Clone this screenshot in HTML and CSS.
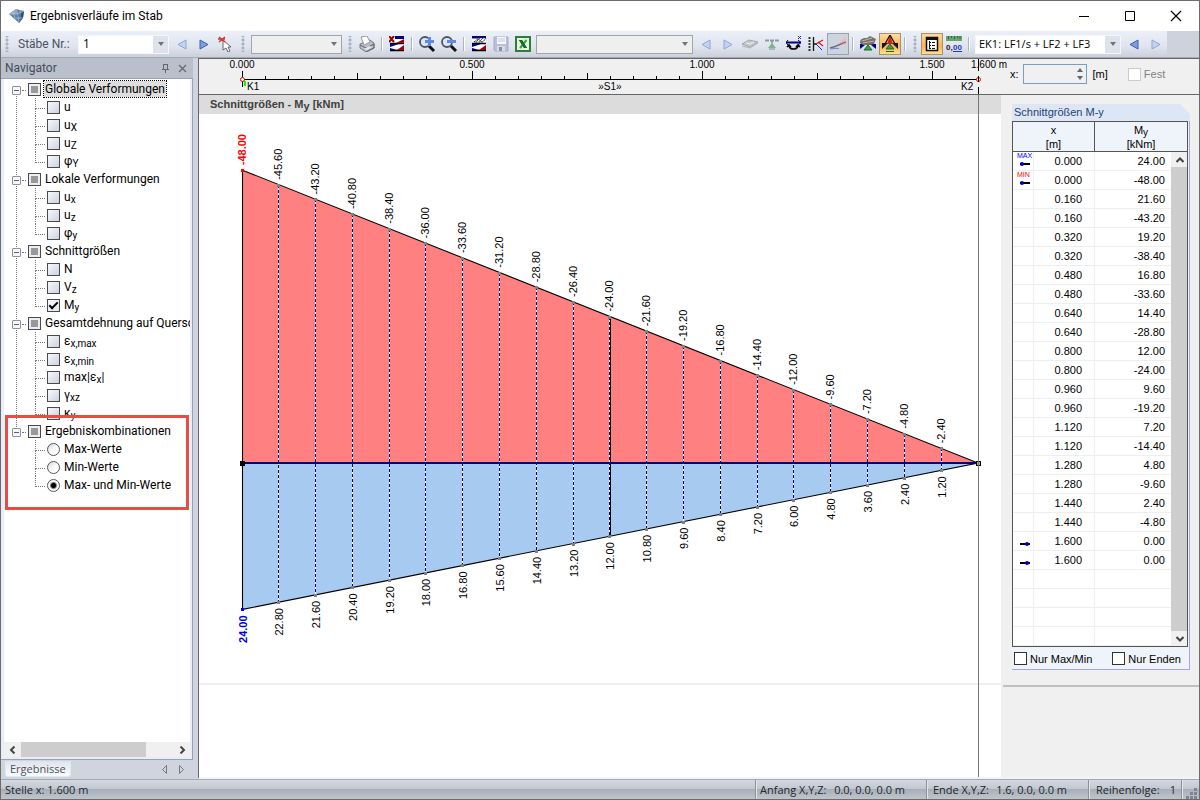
FILE: index.html
```html
<!DOCTYPE html>
<html lang="de">
<head>
<meta charset="utf-8">
<title>Ergebnisverläufe im Stab</title>
<link rel="stylesheet" href="styles.css">
</head>
<body>
<div class="window">
  <header class="titlebar">
    <svg class="app-icon" width="16" height="16" viewBox="0 0 16 16"><path d="M0 6L7 1l8 2-1 7-4 5z" fill="#5f7fa6"/><path d="M0 6l7-5 1 5z" fill="#8fa9c6"/><path d="M9 6l6-3-1 7-4 5z" fill="#2f4d78"/><path d="M0 6l9 0 1 9M7 1l2 5 6-3M4 4l2 6 8 0M11 2l0 11" fill="none" stroke="#c3d2e4" stroke-width=".6"/></svg>
    <h1 class="title">Ergebnisverläufe im Stab</h1>
    <div class="window-buttons">
      <button class="win-btn" aria-label="Minimieren"><svg width="12" height="12"><path d="M1 6.500h10" stroke="#000"/></svg></button>
      <button class="win-btn" aria-label="Maximieren"><svg width="12" height="12"><path d="M1.500 1.500h9v9h-9z" fill="none" stroke="#000"/></svg></button>
      <button class="win-btn" aria-label="Schließen"><svg width="12" height="12"><path d="M1 1l10 10M11 1L1 11" stroke="#000" stroke-width="1.200"/></svg></button>
    </div>
  </header>

  <div class="toolbar" role="toolbar">
    <i class="grip"></i>
    <label class="tool-label" for="member">Stäbe Nr.:</label>
    <span class="combo combo-small"><select id="member"><option>1</option></select></span>
    <button class="tool" aria-label="Vorheriger Stab"><svg width="16" height="16" viewBox="0 0 16 16"><path class="arrow pale" d="M12 4v9L4 8.500z"/></svg></button>
    <button class="tool" aria-label="Nächster Stab"><svg width="16" height="16" viewBox="0 0 16 16"><path class="arrow" d="M4 4v9l8-4.500z"/></svg></button>
    <button class="tool" aria-label="Auswählen"><svg width="16" height="16" viewBox="0 0 16 16"><path d="M5 4v10l3-2 2 4 2-1-2-4h3z" fill="#fff" stroke="#666"/><path d="M1 1l6 5M7 1L1 6M0 3h7" stroke="#d33a35" stroke-width="1.600"/></svg></button>
    <i class="grip"></i>
    <span class="combo combo-small flat"><select aria-label="Auswahl"><option></option></select></span>
    <i class="grip"></i>
    <button class="tool" aria-label="Drucken"><svg width="16" height="16" viewBox="0 0 16 16"><path d="M1 8l10-4 4 3v5l-8 4-6-4z" fill="#b9bdc8" stroke="#777c8a"/><path d="M2 1l6-1 3 6-6 3z" fill="#fff" stroke="#999"/><path d="M1 9l6 3 8-4v4l-8 4" stroke="#5f6475" fill="none"/><path d="M5 13l5-3 3 1-5 3z" fill="#e4e6f5"/></svg></button>
    <i class="sep"></i>
    <button class="tool" aria-label="Werte löschen"><svg width="16" height="16" viewBox="0 0 16 16"><path d="M1 1h14v14H1z" fill="#fff"/><path d="M6 0h9v3H6z" fill="#000088"/><path d="M1 7.500h14M1 14.500h14" stroke="#000" stroke-width="1.500"/><path d="M15 3v4H7z" fill="#a00018"/><path d="M1 8h9l-9 3zM1 12l7 2H1z" fill="#000088"/><path d="M15 9v5H8z" fill="#a00018"/><path d="M0 0l5 6M5 0L0 6" stroke="#900" stroke-width="2"/></svg></button>
    <i class="sep"></i>
    <button class="tool" aria-label="Vergrößern"><svg width="18" height="18" viewBox="0 0 18 18"><circle cx="7" cy="7" r="5" fill="#dfe6f3" stroke="#4d5668" stroke-width="1.800"/><path d="M11 11l5 5" stroke="#111" stroke-width="3"/><path d="M7 6.500h9M11.500 2v9" stroke="#5f8ae6" stroke-width="3"/></svg></button>
    <button class="tool" aria-label="Verkleinern"><svg width="18" height="18" viewBox="0 0 18 18"><circle cx="7" cy="7" r="5" fill="#dfe6f3" stroke="#4d5668" stroke-width="1.800"/><path d="M11 11l5 5" stroke="#111" stroke-width="3"/><path d="M7 6.500h9" stroke="#5f8ae6" stroke-width="3"/></svg></button>
    <i class="sep"></i>
    <button class="tool" aria-label="Verläufe"><svg width="16" height="16" viewBox="0 0 16 16"><path d="M1 1h14v14H1z" fill="#fff"/><path d="M1 0h14v2.500H1z" fill="#000088"/><path d="M1 7.500h14M1 14.500h14" stroke="#000" stroke-width="1.500"/><path d="M3 6l5-4h7l-3 4z" fill="#fff" stroke="#222" stroke-dasharray="2 1"/><path d="M6 5l3-3M9 5l3-3M7 3l4 3" stroke="#333" stroke-width=".8"/><path d="M1 8h9l-9 3zM1 12l7 2H1z" fill="#000088"/><path d="M15 9v5H8z" fill="#a00018"/></svg></button>
    <button class="tool" aria-label="Speichern"><svg width="16" height="16" viewBox="0 0 16 16"><path d="M1 1h14v14H2l-1-1z" fill="#b9bedc" stroke="#a5abc9"/><path d="M4 1h9v7H4z" fill="#f4f6fb"/><path d="M5 3h7M5 5h7" stroke="#c5cbdc"/><path d="M4 10h8v5H4z" fill="#d8dbe6"/><path d="M6 11h3v4H6z" fill="#8b90a8"/></svg></button>
    <button class="tool" aria-label="Excel-Export"><svg width="16" height="16" viewBox="0 0 16 16"><path d="M1 1h14v14H1z" fill="#e5f3e2" stroke="#2b7f38" stroke-width="2"/><path d="M4 4h3l5 8H9z" fill="#176b27"/><path d="M11.500 4L5 12" stroke="#3e9b4a" stroke-width="2"/><path d="M4 4h3l5 8H9z" fill="#176b27"/></svg></button>
    <span class="combo combo-wide flat"><select aria-label="Verlauf"><option></option></select></span>
    <button class="tool" aria-label="Zurück"><svg width="16" height="16" viewBox="0 0 16 16"><path class="arrow pale" d="M12 4v9L4 8.500z"/></svg></button>
    <button class="tool" aria-label="Vor"><svg width="16" height="16" viewBox="0 0 16 16"><path class="arrow pale" d="M4 4v9l8-4.500z"/></svg></button>
    <button class="tool" aria-label="Ebenen"><svg width="16" height="16" viewBox="0 0 16 16"><path d="M0 8l7-4 9 2-8 5z" fill="#c5c8cc" stroke="#a2a5aa"/><path d="M0 10l8 2 8-5" fill="none" stroke="#aeb1b6"/><path d="M4 7l4 1 4-2" fill="none" stroke="#eee"/></svg></button>
    <button class="tool" aria-label="Lager"><svg width="16" height="16" viewBox="0 0 16 16"><path d="M1 4.500h14" stroke="#8e9aa0" stroke-width="2" stroke-dasharray="4 1"/><path d="M8 5v4" stroke="#777"/><path d="M8 7l4 5H4z" fill="#78b888"/><path d="M5 13h6" stroke="#699c76"/></svg></button>
    <button class="tool" aria-label="Randwerte"><svg width="16" height="16" viewBox="0 0 16 16"><path d="M0 6.500h15" stroke="#000088" stroke-width="2"/><path d="M2 4l-2 2.500L2 9M12 4l3 2.500L12 9" fill="none" stroke="#000088"/><path d="M12 0l3 3M15 0l-3 3" stroke="#336"/><path d="M3 10c1 4 8 4 9 0M1 11l2-2 2 2M10 11l2-2 2 2" fill="none" stroke="#000" stroke-width="1.600"/></svg></button>
    <button class="tool" aria-label="Schnitte"><svg width="16" height="16" viewBox="0 0 16 16"><path d="M1.500 1v14" stroke="#333" stroke-width="2" stroke-dasharray="2 1"/><path d="M5.500 1v14M6 8h3" stroke="#111" stroke-width="1.300"/><path d="M8 8l7-4M10 6l5 4" stroke="#d02020" stroke-width="1.300"/><path d="M8 8l6 6" stroke="#2020d0"/></svg></button>
    <button class="tool pressed" aria-label="Glätten"><svg width="18" height="18" viewBox="0 0 18 18"><path d="M8 10l9-8v8z" fill="#efb7bc"/><path d="M1 12h8l-8 4z" fill="#a9c5e8"/><path d="M1 13c6-1 10-4 16-6" stroke="#667" stroke-width="1.300" fill="none"/><path d="M1 13.500h9" stroke="#7b8fc0"/></svg></button>
    <i class="sep"></i>
    <button class="tool" aria-label="Stablager"><svg width="18" height="18" viewBox="0 0 18 18"><path d="M1 9h16v5l-5-4H6l-5 4z" fill="#000088"/><path d="M1 8c0-5 4-5 7-5l3-2 6 3-2 5-4 1H4z" fill="#777168"/><path d="M3 6l10-3M4 8l11-2" stroke="#bbb5aa"/><path d="M9 10l4 5H5z" fill="#3e9b55" stroke="#176b27"/></svg></button>
    <button class="tool active" aria-label="Ergebniswerte"><svg width="18" height="18" viewBox="0 0 18 18"><path d="M1 8h16v6l-5-5H6l-5 5z" fill="#111155"/><path d="M9 0l3 9H6z" fill="#c22a22"/><path d="M9 0l5 9M9 0L4 9" stroke="#201010" stroke-width="1.300"/><path d="M9 9l4 5H5z" fill="#3e9b55" stroke="#176b27"/><path d="M5 16.500h8" stroke="#176b27"/></svg></button>
    <i class="sep"></i>
    <i class="grip"></i>
    <button class="tool active" aria-label="Tabelle"><svg width="16" height="16" viewBox="0 0 16 16"><path d="M2.500 1.500h11v13h-11z" fill="#fff" stroke="#111" stroke-width="1.500"/><path d="M2 3h12" stroke="#111" stroke-width="2"/><path d="M5.500 5v8M5 6.500h2M5 9.500h2M5 12.500h2M8 6.500h3M8 9.500h3M8 12.500h3" stroke="#111"/></svg></button>
    <button class="tool" aria-label="Dezimalstellen"><svg width="18" height="18" viewBox="0 0 18 18"><path d="M1 1h16v5H1z" fill="#67a56d"/><path d="M3.500 1v3M6.500 1v2M9.500 1v3M12.500 1v2M15 1v3" stroke="#2d6c3a"/><text class="digits" x="1" y="15">0,</text><text class="digits blue" x="8" y="15">00</text><path d="M8 16.500h9" stroke="#2338b8"/></svg></button>
    <i class="sep"></i>
    <span class="combo combo-case"><select aria-label="Ergebniskombination"><option>EK1: LF1/s + LF2 + LF3</option></select></span>
    <button class="tool" aria-label="Vorherige Kombination"><svg width="16" height="16" viewBox="0 0 16 16"><path class="arrow" d="M12 4v9L4 8.500z"/></svg></button>
    <button class="tool" aria-label="Nächste Kombination"><svg width="16" height="16" viewBox="0 0 16 16"><path class="arrow pale" d="M4 4v9l8-4.500z"/></svg></button>
    <i class="toolbar-rest"></i>
  </div>

  <div class="workspace">
    <aside class="navigator">
      <div class="nav-head">
        <h2 class="nav-title">Navigator</h2>
        <button class="nav-btn" aria-label="Anheften"><svg width="9" height="9"><path d="M2.500 0v5M6.500 0v5M2 .5h5M1 5.500h7M4.500 6v3" stroke="#666" fill="none"/></svg></button>
        <button class="nav-btn" aria-label="Navigator schließen"><svg width="9" height="9"><path d="M1 1l7 7M8 1L1 8" stroke="#666" stroke-width="1.200"/></svg></button>
      </div>
      <div class="tree-panel">
        <ul class="tree">
          <li class="group">
            <div class="node"><button class="fold" aria-label="Zuklappen"></button><input type="checkbox" class="box partial" id="g1"><label class="selected" for="g1">Globale Verformungen</label></div>
            <ul class="leaves">
              <li><input type="checkbox" class="box" id="a1"><label for="a1">u</label></li>
              <li><input type="checkbox" class="box" id="a2"><label for="a2">u<sub>X</sub></label></li>
              <li><input type="checkbox" class="box" id="a3"><label for="a3">u<sub>Z</sub></label></li>
              <li><input type="checkbox" class="box" id="a4"><label for="a4">φ<sub>Y</sub></label></li>
            </ul>
          </li>
          <li class="group">
            <div class="node"><button class="fold" aria-label="Zuklappen"></button><input type="checkbox" class="box partial" id="g2"><label for="g2">Lokale Verformungen</label></div>
            <ul class="leaves">
              <li><input type="checkbox" class="box" id="b1"><label for="b1">u<sub>x</sub></label></li>
              <li><input type="checkbox" class="box" id="b2"><label for="b2">u<sub>z</sub></label></li>
              <li><input type="checkbox" class="box" id="b3"><label for="b3">φ<sub>y</sub></label></li>
            </ul>
          </li>
          <li class="group">
            <div class="node"><button class="fold" aria-label="Zuklappen"></button><input type="checkbox" class="box partial" id="g3"><label for="g3">Schnittgrößen</label></div>
            <ul class="leaves">
              <li><input type="checkbox" class="box" id="c1"><label for="c1">N</label></li>
              <li><input type="checkbox" class="box" id="c2"><label for="c2">V<sub>z</sub></label></li>
              <li><input type="checkbox" class="box" id="c3" checked><label for="c3">M<sub>y</sub></label></li>
            </ul>
          </li>
          <li class="group">
            <div class="node"><button class="fold" aria-label="Zuklappen"></button><input type="checkbox" class="box partial" id="g4"><label for="g4">Gesamtdehnung auf Querschnitt</label></div>
            <ul class="leaves">
              <li><input type="checkbox" class="box" id="d1"><label for="d1">ε<sub>x,max</sub></label></li>
              <li><input type="checkbox" class="box" id="d2"><label for="d2">ε<sub>x,min</sub></label></li>
              <li><input type="checkbox" class="box" id="d3"><label for="d3">max|ε<sub>x</sub>|</label></li>
              <li><input type="checkbox" class="box" id="d4"><label for="d4">γ<sub>xz</sub></label></li>
              <li><input type="checkbox" class="box" id="d5"><label for="d5">κ<sub>y</sub></label></li>
            </ul>
          </li>
          <li class="group marked">
            <div class="node"><button class="fold" aria-label="Zuklappen"></button><input type="checkbox" class="box partial" id="g5"><label for="g5">Ergebniskombinationen</label></div>
            <ul class="leaves">
              <li><input type="radio" name="ek" class="dot" id="e1"><label for="e1">Max-Werte</label></li>
              <li><input type="radio" name="ek" class="dot" id="e2"><label for="e2">Min-Werte</label></li>
              <li><input type="radio" name="ek" class="dot" id="e3" checked><label for="e3">Max- und Min-Werte</label></li>
            </ul>
          </li>
        </ul>
        <div class="hscroll">
          <button class="scroll-btn" aria-label="Nach links"><svg width="8" height="8"><path d="M5.500 .5L2 4l3.500 3.500" fill="none" stroke="#444" stroke-width="2"/></svg></button>
          <div class="htrack"><div class="hthumb"></div></div>
          <button class="scroll-btn" aria-label="Nach rechts"><svg width="8" height="8"><path d="M2.500 .5L6 4 2.500 7.500" fill="none" stroke="#444" stroke-width="2"/></svg></button>
        </div>
      </div>
      <div class="nav-tabs">
        <button class="tab">Ergebnisse</button>
        <button class="nav-btn" aria-label="Tab zurück"><svg width="8" height="9"><path d="M5.500 .5v8L1.500 4.500z" fill="none" stroke="#777"/></svg></button>
        <button class="nav-btn" aria-label="Tab vor"><svg width="8" height="9"><path d="M1.500 .5v8l4-4z" fill="none" stroke="#777"/></svg></button>
      </div>
    </aside>

    <main class="results">
      <div class="ruler-row">
        <svg class="ruler" id="ruler" viewBox="0 0 802 35" preserveAspectRatio="xMinYMin meet"></svg>
        <form class="position">
          <label for="pos">x:</label>
          <span class="spin"><input id="pos" type="text" disabled><svg width="8" height="14"><path d="M1 5l3-4 3 4zM1 9l3 4 3-4z" fill="#666"/></svg></span>
          <span class="unit">[m]</span>
          <input class="plain-box faded" type="checkbox" id="fixed" disabled><label class="grey" for="fixed">Fest</label>
        </form>
      </div>
      <div class="content-row">
        <section class="plot">
          <h2 class="plot-title">Schnittgrößen - M<sub>y</sub> [kNm]</h2>
          <svg class="chart" id="chart" viewBox="0 0 802 664" preserveAspectRatio="xMinYMin meet"></svg>
          <i class="divider"></i>
          <i class="cursor"></i>
        </section>
        <section class="side">
          <div class="card">
            <h3 class="card-title">Schnittgrößen M-y</h3>
            <div class="card-body">
              <div class="table-frame">
                <table class="values">
                  <colgroup><col class="col-mark"><col class="col-x"><col></colgroup>
                  <thead><tr><th colspan="2">x<br>[m]</th><th>M<sub>y</sub><br>[kNm]</th></tr></thead>
                  <tbody id="rows"></tbody>
                </table>
                <div class="vscroll">
                  <button class="scroll-btn" aria-label="Nach oben"><svg width="8" height="8"><path d="M.5 6L4 2.500 7.500 6" fill="none" stroke="#444" stroke-width="2"/></svg></button>
                  <div class="vthumb"></div>
                  <button class="scroll-btn" aria-label="Nach unten"><svg width="8" height="8"><path d="M.5 2L4 5.500 7.500 2" fill="none" stroke="#444" stroke-width="2"/></svg></button>
                </div>
              </div>
              <div class="filters">
                <span><input class="plain-box" type="checkbox" id="f1"><label for="f1">Nur Max/Min</label></span>
                <span><input class="plain-box" type="checkbox" id="f2"><label for="f2">Nur Enden</label></span>
              </div>
            </div>
          </div>
        </section>
      </div>
    </main>
  </div>

  <footer class="status">
    <span class="st-main">Stelle x: 1.600 m</span>
    <span class="st st-start"><span>Anfang X,Y,Z:</span><span>0.0, 0.0, 0.0 m</span></span>
    <span class="st st-end"><span>Ende X,Y,Z:</span><span>1.6, 0.0, 0.0 m</span></span>
    <span class="st st-order"><span>Reihenfolge:</span><span>1</span></span>
    <span class="st st-size"><svg width="12" height="12"><path d="M8 1h3v3H8zM4 5h3v3H4zM8 5h3v3H8zM0 9h3v3H0zM4 9h3v3H4zM8 9h3v3H8z" fill="#7d8593"/></svg></span>
  </footer>
</div>
<script src="chart.js"></script>
</body>
</html>
```

FILE: styles.css
```css
*, *::before, *::after { box-sizing: border-box; }

body {
  margin: 0;
  font: 12px/18px "Open Sans", "Noto Sans", sans-serif;
  color: #000;
}

h1, h2, h3, ul { margin: 0; padding: 0; font-weight: normal; }
ul { list-style: none; }
button { padding: 0; border: 0; background: none; font: inherit; color: inherit; }
svg { display: block; }

.window {
  display: flex;
  flex-direction: column;
  height: 100vh;
  min-height: 640px;
  border: 1px solid #6c6c6c;
  background: #cfd4de;
  overflow: hidden;
}

/* Title bar */
.titlebar {
  display: flex;
  align-items: center;
  height: 30px;
  flex: none;
  background: #fff;
  padding-left: 8px;
}
.title { flex: 1; margin-left: 5px; font: 12px/18px Roboto, sans-serif; }
.window-buttons { display: flex; }
.win-btn { width: 46px; height: 30px; display: grid; place-items: center; }

/* Toolbar */
.toolbar {
  display: flex;
  align-items: center;
  height: 27px;
  flex: none;
  background: linear-gradient(#eaeff8, #dfe4ee 60%, #cbd0db);
  border-bottom: 1px solid #a4a9b3;
}
.grip {
  width: 12px;
  height: 16px;
  flex: none;
  background: radial-gradient(circle, #a9b0bf 1px, transparent 2px) center / 4px 4px repeat-y;
}
.sep {
  width: 8px;
  height: 14px;
  flex: none;
  background: linear-gradient(90deg, transparent 3px, #aeb4c0 3px, #aeb4c0 4px, #fff 4px, #fff 5px, transparent 5px);
}
.tool-label { width: 63px; padding-left: 5px; font: 12px/18px Roboto, sans-serif; color: #4b5260; white-space: nowrap; }
.combo { position: relative; flex: none; margin: 0 2px; height: 19px; display: flex; }
.combo select {
  appearance: none;
  width: 100%;
  padding: 0 18px 0 4px;
  background: linear-gradient(90deg, #fff, #fff) left / calc(100% - 15px) 100% no-repeat #dde2eb;
  border: 1px solid #f4f6fa;
  font: 12px/16px "Open Sans", "Noto Sans", sans-serif;
  color: #000;
}
.combo.flat select { background: #efefef; border: 1px solid #a5a5a5; }
.combo::after {
  content: "";
  position: absolute;
  right: 5px;
  top: 7px;
  border: 3px solid transparent;
  border-top: 4px solid #6d7481;
  border-bottom: 0;
}
.combo-small { width: 91px; }
.combo-wide { width: 157px; }
.combo-case { width: 146px; }
.combo-case select { font-size: 11px; padding-left: 3px; }
.tool { width: 22px; height: 22px; flex: none; display: grid; place-items: center; }
.pressed { background: #cdd4dd; border: 1px solid #9aa3ad; }
.active { background: linear-gradient(#fddaa0, #fcb44f 60%, #ffdf8c); border: 1px solid #a8926c; }
.arrow { fill: #7d9fe0; stroke: #3a5fae; }
.arrow.pale { fill: #c3d3f3; stroke: #8ea6d8; }
.digits { font: bold 8px "Liberation Sans", sans-serif; fill: #222; }
.digits.blue { fill: #2338b8; }
.toolbar-rest { flex: 1; align-self: stretch; background: #cdd2dc; }

/* Workspace */
.workspace { display: flex; flex: 1; min-height: 0; }

.navigator {
  width: 192px;
  flex: none;
  display: flex;
  flex-direction: column;
  margin-right: 5px;
}
.nav-head {
  display: flex;
  align-items: center;
  height: 20px;
  flex: none;
  padding: 0 2px 0 4px;
  background: #b9c0cb;
  color: #454c58;
}
.nav-title { flex: 1; font: 12px/18px Roboto, sans-serif; }
.nav-btn { width: 17px; height: 18px; display: grid; place-items: center; }
.tree-panel {
  flex: 1;
  min-height: 0;
  display: flex;
  flex-direction: column;
  padding: 0 2px 2px 3px;
  background: #e8edf7;
  border: 1px solid #9ba2ae;
  border-left: 0;
}
.tree {
  flex: 1;
  min-height: 0;
  padding-top: 1px;
  background: #fff;
  font-family: Roboto, "Noto Sans", sans-serif;
  overflow: hidden;
}
.group { position: relative; white-space: nowrap; }
.group:not(:last-child)::before {
  content: "";
  position: absolute;
  left: 12px;
  top: 14px;
  bottom: -5px;
  border-left: 1px dotted #777;
}
.node { display: flex; align-items: center; height: 18px; padding-left: 8px; }
.fold {
  position: relative;
  width: 9px;
  height: 9px;
  flex: none;
  margin: 2px 0 0;
  border: 1px solid #919191;
  border-radius: 1px;
  background: linear-gradient(#3f62b0, #3f62b0) center / 5px 1px no-repeat #f6f6f4;
}
.fold::after { content: ""; position: absolute; left: 9px; top: 3px; width: 4px; border-top: 1px dotted #777; }
.box {
  appearance: none;
  width: 13px;
  height: 13px;
  margin: 0;
  flex: none;
  border: 1px solid #4a4a4a;
  background: linear-gradient(135deg, #f7f8fb, #ccd3e0);
}
.node .box { margin: 0 0 0 7px; }
.partial { background: linear-gradient(#999, #999) center / 7px 7px no-repeat #eceef2; }
.box:checked {
  background: linear-gradient(135deg, #f7f8fb, #e2e6ee);
  display: grid;
  place-items: center;
}
.box:checked::before {
  content: "";
  width: 9px;
  height: 5px;
  border: solid #000;
  border-width: 0 0 2px 2px;
  transform: rotate(-45deg);
  margin-bottom: 2px;
}
.node label { padding: 0 1px; margin-left: 3px; line-height: 16px; }
.node .selected { background: #dedede; outline: 1px dotted #000; }
.leaves { margin-left: 31px; }
.leaves li { position: relative; display: flex; align-items: center; height: 18px; padding-left: 12px; }
.leaves li::before {
  content: "";
  position: absolute;
  left: 0;
  top: 0;
  width: 10px;
  height: 11px;
  border: dotted #777;
  border-width: 0 0 1px 1px;
}
.leaves li:not(:last-child)::after {
  content: "";
  position: absolute;
  left: 0;
  top: 10px;
  height: 8px;
  border-left: 1px dotted #777;
}
.leaves label { margin-left: 4px; }
sub { font-size: 10px; line-height: 0; vertical-align: -2px; }
.dot {
  appearance: none;
  width: 13px;
  height: 13px;
  margin: 0;
  border: 1px solid #555;
  border-radius: 50%;
  background: linear-gradient(135deg, #d5dae4, #fff 60%);
}
.dot:checked { background: radial-gradient(circle, #000 2px, #fff 4px); }
.marked::after {
  content: "";
  position: absolute;
  left: 1px;
  right: 1px;
  top: -7px;
  height: 95px;
  border: 3px solid #e94b45;
  pointer-events: none;
}
.hscroll { display: flex; height: 15px; flex: none; background: #f0f0f0; }
.scroll-btn { width: 17px; height: 15px; flex: none; display: grid; place-items: center; }
.htrack { flex: 1; }
.hthumb { width: 82%; height: 15px; background: #cdcdcd; }
.nav-tabs { display: flex; align-items: center; height: 19px; flex: none; padding: 0 3px 0 4px; }
.tab {
  margin: 0 auto 2px 0;
  height: 16px;
  padding: 0 4px;
  line-height: 15px;
  font-size: 11px;
  color: #4b5260;
  background: linear-gradient(#dfe4ec, #fafbfc);
  border: 1px solid #d6eef2;
  border-top: 0;
  border-radius: 0 0 3px 3px;
}

/* Results area */
.results {
  flex: 1;
  min-width: 0;
  display: flex;
  flex-direction: column;
  border-left: 1px solid #666;
  border-top: 1px solid #666;
  border-bottom: 2px solid #f4f4f4;
  background: #f0f0f0;
  font: 11px/14px "Liberation Sans", Arial, sans-serif;
}
.ruler-row {
  display: grid;
  grid-template-columns: 1fr 198px;
  flex: none;
  border-bottom: 1px solid #666;
}
.ruler { width: 100%; overflow: visible; }
.ruler text { font: 10px "Liberation Sans", Arial, sans-serif; }
.chart text { font: 11px "Liberation Sans", Arial, sans-serif; }
.position { display: flex; align-items: center; padding: 0 0 5px 9px; }
.spin {
  display: flex;
  align-items: center;
  width: 64px;
  height: 20px;
  margin: 0 6px 0 4px;
  padding-right: 2px;
  border: 1px solid #7b9ebd;
}
.spin input { flex: 1; min-width: 0; height: 18px; border: 0; background: #f0f0f0; }
.plain-box { appearance: none; width: 13px; height: 13px; flex: none; margin: 0; border: 1px solid #333; background: #fff; }
.faded { margin-left: 20px; border-color: #ccc; }
.grey { color: #838383; margin-left: 3px; }

.content-row {
  display: grid;
  grid-template-columns: 1fr 198px;
  flex: 1;
  min-height: 0;
}
.plot { position: relative; background: #fff; min-width: 0; min-height: 0; overflow: hidden; }
.plot-title {
  height: 19px;
  padding-left: 11px;
  background: #dcdcdc;
  font-size: 11px;
  line-height: 18px;
  font-weight: bold;
  color: #404040;
}
.plot-title sub { font-size: 11px; }
.chart { width: 100%; }
.chart .peak { font-weight: bold; }
.chart .low { fill: #f00; }
.chart .high { fill: #00e; }
.chart .station { shape-rendering: crispEdges; }
.divider { position: absolute; left: 0; right: 0; top: 588px; height: 2px; background: #f0f0f0; }
.cursor { position: absolute; left: 97.1%; top: 0; bottom: 0; border-left: 1px solid #777; }

.side { padding: 9px 9px 0 11px; min-height: 0; overflow: hidden; }
.side::after {
  content: "";
  display: block;
  height: 2px;
  margin: 15px -9px 0 -9px;
  background: #c0c0c0;
}
.card-title {
  height: 17px;
  padding-left: 2px;
  font-size: 11px;
  line-height: 17px;
  font-weight: normal;
  color: #1e4372;
  background: #dce6f5;
  clip-path: polygon(0 0, 168px 0, 100% 10px, 100% 100%, 0 100%);
}
.card-body {
  border: solid #a5a5e5;
  border-width: 0 1px 1px 0;
  padding-right: 1px;
  background: #eff3fa;
}
.table-frame { display: flex; position: relative; border: 1px solid #555; background: #fff; }
.values { width: 100%; border-collapse: separate; border-spacing: 0; table-layout: fixed; }
.col-mark { width: 20px; }
.col-x { width: 61px; }
.values th {
  height: 30px;
  padding: 0;
  font-weight: normal;
  line-height: 14px;
  background: #eff3fa;
  border-bottom: 1px solid #555;
}
.values th + th { border-left: 1px solid #555; }
.values td {
  height: 19px;
  padding: 0;
  line-height: 18px;
  text-align: right;
  border-bottom: 1px solid #eee;
}
.values td + td { border-left: 1px solid #eee; }
.values td:nth-child(2) { padding-right: 12px; }
.values td:nth-child(3) { padding-right: 22px; }
.mark { margin-left: 4px; overflow: visible; }
.mark text { font: 7px "Liberation Sans", sans-serif; }
.vscroll {
  position: absolute;
  right: 0;
  top: 30px;
  bottom: 0;
  width: 16px;
  display: flex;
  flex-direction: column;
  background: #f0f0f0;
}
.vthumb { flex: 1; background: #cdcdcd; }
.filters { display: flex; gap: 20px; height: 22px; padding: 1px 0 0 2px; }
.filters span { display: flex; align-items: center; gap: 3px; white-space: nowrap; }

/* Status bar */
.status {
  display: flex;
  height: 20px;
  flex: none;
  align-items: stretch;
  font-size: 11px;
  line-height: 20px;
  color: #22262d;
  border-top: 1px solid #a3a8b2;
  background: linear-gradient(#d4d8e0, #c2c8d2 45%, #a9afb9 50%, #bfc5cd);
}
.st-main { flex: 1; padding-left: 4px; }
.st { display: flex; justify-content: space-between; padding-left: 4px; border-left: 1px solid #8b919b; box-shadow: inset 1px 0 #e2e5ea; white-space: nowrap; }
.st-start { width: 171px; padding-right: 21px; }
.st-end { width: 162px; padding-right: 21px; padding-left: 6px; }
.st-order { width: 93px; padding: 0 5px 0 7px; }
.st-size { width: 18px; align-items: flex-end; }
```

FILE: chart.js
```js
const LENGTH = 1.6;
const STATIONS = 20;
const X0 = 43;
const SPAN = 736;
const ZERO = 349;
const SCALE = 6.1;

const stationX = i => Math.floor(X0 - 0.1 + SPAN * i / STATIONS) + 0.5;
const lower = i => -48 * (1 - i / STATIONS);
const upper = i => 24 * (1 - i / STATIONS);
const yOf = v => ZERO + v * SCALE;

function drawChart() {
  const xEnd = X0 + SPAN;
  let s = `<path d="M${X0} ${ZERO}V${yOf(-48)}L${xEnd} ${ZERO}z" fill="#ff8080"/>`;
  s += `<path d="M${X0} ${ZERO}V${yOf(24)}L${xEnd} ${ZERO}z" fill="#a6caf0"/>`;
  for (let i = 1; i < STATIONS; i++) {
    const x = stationX(i);
    const line = `M${x} ${Math.round(yOf(lower(i)))}V${Math.round(yOf(upper(i)))}`;
    s += `<path class="station" d="${line}" stroke="#fff"/><path class="station" d="${line}" stroke="#000080" stroke-dasharray="3 2"/>`;
  }
  s += `<path d="M411.500 ${yOf(-24)}V${yOf(12)}" stroke="#000"/>`;
  s += `<path d="M${X0 + 0.5} ${yOf(24)}V${yOf(-48)}L${xEnd} ${ZERO}L${X0 + 0.5} ${yOf(24)}" fill="none" stroke="#000" stroke-width="1.100"/>`;
  s += `<path d="M${X0} ${ZERO}H${xEnd}" stroke="#000080" stroke-width="2"/>`;
  for (let i = 0; i < STATIONS; i++) {
    const peak = i === 0;
    const x = peak ? X0 + 0.5 : stationX(i);
    const a = yOf(lower(i));
    const b = yOf(upper(i));
    s += `<rect x="${x - 1.5}" y="${Math.round(a) - 1}" width="3" height="3" fill="${peak ? "#f00" : "#808080"}"/>`;
    s += `<rect x="${x - 1.5}" y="${Math.round(b) - 1}" width="3" height="3" fill="${peak ? "#00f" : "#808080"}"/>`;
    s += `<text class="${peak ? "peak low" : ""}" transform="translate(${x + 3} ${a - 5}) rotate(-90)">${lower(i).toFixed(2)}</text>`;
    s += `<text class="${peak ? "peak high" : ""}" text-anchor="end" transform="translate(${x + 4} ${b + 6}) rotate(-90)">${upper(i).toFixed(2)}</text>`;
  }
  s += `<rect x="41" y="347" width="5" height="5"/>`;
  s += `<rect x="777.500" y="347.500" width="4" height="4" fill="#aaa" stroke="#000"/>`;
  document.getElementById("chart").innerHTML = s;
}

function drawRuler() {
  let s = `<path d="M${X0} 20.500H${X0 + SPAN}" stroke="#000"/>`;
  for (let i = 0; i <= 32; i++) {
    const x = X0 + i * 23 + 0.5;
    const top = i % 10 === 0 ? 12 : i % 5 === 0 ? 14 : 17;
    s += `<path d="M${x} ${top}V20" stroke="#000"/>`;
  }
  for (const v of [0, 0.5, 1, 1.5]) {
    s += `<text x="${X0 + v / LENGTH * SPAN}" y="9" text-anchor="middle">${v.toFixed(3)}</text>`;
  }
  s += `<text x="772" y="9">1.600 m</text>`;
  s += `<text x="48" y="31">K1</text><text x="762" y="31">K2</text>`;
  s += `<text x="411" y="31" text-anchor="middle">»S1»</text>`;
  s += `<path d="M43.500 12v16M779.500 0v12M779.500 28v7" stroke="#000"/><path d="M45 22h2v5h-2z" fill="#0f0"/>`;
  s += `<circle cx="43.500" cy="20.500" r="2" fill="#fff" stroke="#e00"/><circle cx="779.500" cy="20.500" r="2" fill="#fff" stroke="#e00"/><path d="M779.500 18v5" stroke="#000"/>`;
  document.getElementById("ruler").innerHTML = s;
}

function markIcon(name, color) {
  const text = name ? `<text x="0" y="5" fill="${color}">${name}</text>` : "";
  return `<svg class="mark" width="16" height="16" viewBox="0 0 16 16">${text}<path d="M3 11h10" stroke="#000" stroke-width="2"/><circle cx="${name ? 5 : 10}" cy="11" r="2" fill="#00c"/></svg>`;
}

function fillTable() {
  let s = "";
  const row = (mark, x, m) => `<tr><td>${mark}</td><td>${x}</td><td>${m}</td></tr>`;
  for (let i = 0; i <= STATIONS; i += 2) {
    const x = (LENGTH * i / STATIONS).toFixed(3);
    const last = i === STATIONS;
    s += row(last ? markIcon() : i ? "" : markIcon("MAX", "#00f"), x, upper(i).toFixed(2));
    s += row(last ? markIcon() : i ? "" : markIcon("MIN", "#f00"), x, last ? "0.00" : lower(i).toFixed(2));
  }
  for (let i = 0; i < 4; i++) s += row("", "", "");
  document.getElementById("rows").innerHTML = s;
}

drawRuler();
drawChart();
fillTable();
```
